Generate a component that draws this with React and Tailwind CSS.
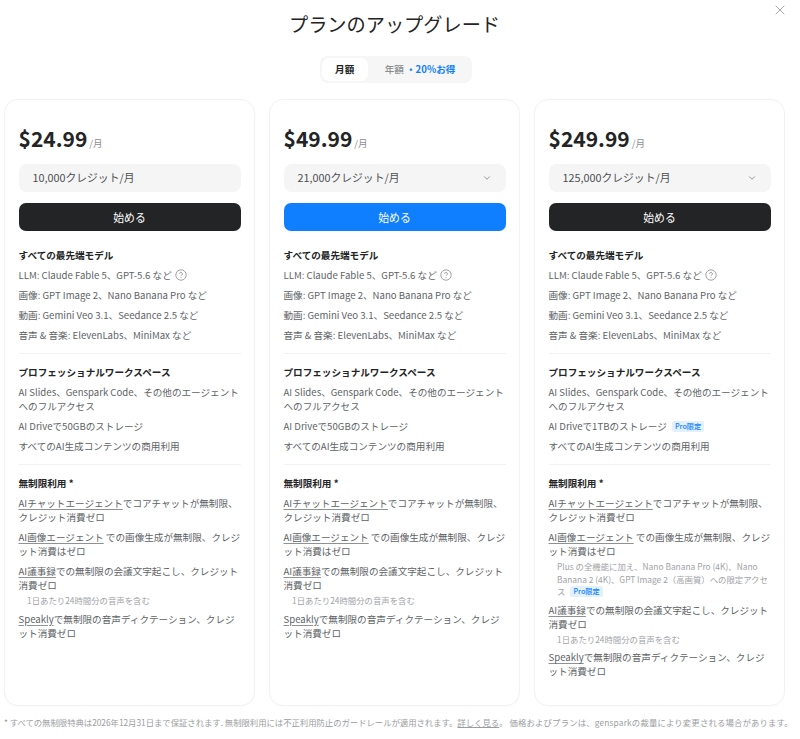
import React from "react";
import { X, ChevronDown } from "lucide-react";

const plans = [
  { price: "$24.99", credits: "10,000クレジット/月", dark: true, arrow: false, drive: "AI Driveで50GBのストレージ" },
  { price: "$49.99", credits: "21,000クレジット/月", dark: false, arrow: true, drive: "AI Driveで50GBのストレージ" },
  { price: "$249.99", credits: "125,000クレジット/月", dark: true, arrow: true, drive: "AI Driveで1TBのストレージ", pro: true },
];

function ProBadge() {
  return (
    <span className="inline-block ml-[5px] px-[3px] rounded-[2px] bg-[#e3f1ff] text-[#0f7fff] text-[7.2px] leading-[11px] font-medium align-[1px]">
      Pro限定
    </span>
  );
}

function HelpIcon() {
  return (
    <svg className="inline-block ml-[3px] align-[-2px]" width="12" height="12" viewBox="0 0 12 12" fill="none">
      <circle cx="6" cy="6" r="5.2" stroke="#8a8a8a" strokeWidth="0.8" />
      <path d="M4.6 4.8a1.4 1.4 0 1 1 2.1 1.2c-.5.3-.7.5-.7 1" stroke="#8a8a8a" strokeWidth="0.8" fill="none" />
      <circle cx="6" cy="8.6" r="0.5" fill="#8a8a8a" />
    </svg>
  );
}

function Heading({ children }) {
  return <h3 className="text-[9.6px] leading-[14px] font-bold text-[#232425] mb-[6px]">{children}</h3>;
}

function Line({ children }) {
  return <p className="text-[9.6px] leading-[14px] text-[#606366] mb-[6px]">{children}</p>;
}

function Note({ children }) {
  return <p className="pl-[8.5px] text-[8.4px] leading-[12.5px] text-[#a0a3a6] -mt-[4px] mb-[5px]">{children}</p>;
}

function Link({ children }) {
  return <span className="underline underline-offset-2 decoration-[#8f9295]">{children}</span>;
}

function PlanCard({ plan }) {
  return (
    <div className="flex-1 h-[607px] rounded-[14px] border border-[#f2f2f3] bg-white px-[13.5px] pt-[24px] shadow-[0_1px_2px_rgba(0,0,0,0.02)]">
      <div className="flex items-baseline h-[28px]">
        <span className="text-[21px] font-bold leading-[28px] text-[#232425]">{plan.price}</span>
        <span className="ml-[2px] text-[9.6px] text-[#8a8d90]">/月</span>
      </div>
      <div className="mt-[12px] h-[28px] rounded-[8px] bg-[#f5f5f5] px-[14px] pb-[1px] flex items-center justify-between text-[10.8px] text-[#4d4f52]">
        {plan.credits}
        {plan.arrow && <ChevronDown size={10} className="text-[#808285]" />}
      </div>
      <button
        className={
          plan.dark
            ? "mt-[11px] w-full h-[28px] rounded-[7px] bg-[#232425] text-white text-[10.8px]"
            : "mt-[11px] w-full h-[28px] rounded-[7px] bg-[#0f7fff] text-white text-[10.8px]"
        }
      >
        始める
      </button>

      <div className="mt-[17px]">
        <Heading>すべての最先端モデル</Heading>
        <Line>
          LLM: Claude Fable 5、GPT-5.6 など
          <HelpIcon />
        </Line>
        <Line>画像: GPT Image 2、Nano Banana Pro など</Line>
        <Line>動画: Gemini Veo 3.1、Seedance 2.5 など</Line>
        <Line>音声 &amp; 音楽: ElevenLabs、MiniMax など</Line>
      </div>
      <div className="h-px bg-[#f2f2f3] mt-[11px] mb-[11px]" />
      <div>
        <Heading>プロフェッショナルワークスペース</Heading>
        <Line>AI Slides、Genspark Code、その他のエージェントへのフルアクセス</Line>
        <Line>
          {plan.drive}
          {plan.pro && <ProBadge />}
        </Line>
        <Line>すべてのAI生成コンテンツの商用利用</Line>
      </div>
      <div className="h-px bg-[#f2f2f3] mt-[11px] mb-[11px]" />
      <div>
        <Heading>無制限利用 *</Heading>
        <Line>
          <Link>AIチャットエージェント</Link>でコアチャットが無制限、クレジット消費ゼロ
        </Line>
        <Line>
          <Link>AI画像エージェント</Link> での画像生成が無制限、クレジット消費はゼロ
        </Line>
        {plan.pro && (
          <Note>
            Plus の全機能に加え、Nano Banana Pro (4K)、Nano Banana 2 (4K)、GPT Image 2（高画質）への限定アクセス
            <ProBadge />
          </Note>
        )}
        <Line>
          <Link>AI議事録</Link>での無制限の会議文字起こし、クレジット消費ゼロ
        </Line>
        <Note>1日あたり24時間分の音声を含む</Note>
        <Line>
          <Link>Speakly</Link>で無制限の音声ディクテーション、クレジット消費ゼロ
        </Line>
      </div>
    </div>
  );
}

export default function App() {
  return (
    <div className="relative w-[800px] h-[739px] overflow-hidden bg-white font-['Noto_Sans_CJK_JP','Noto_Sans',sans-serif]">
      <button className="absolute top-[2px] right-[12px] text-[#7d7f82]">
        <X size={16} strokeWidth={1} />
      </button>
      <div className="w-[781px] ml-[4px]">
        <h1 className="pt-[9px] text-center text-[19.2px] leading-[30px] text-[#232425]">プランのアップグレード</h1>
        <div className="flex justify-center mt-[17px] pl-[3px]">
          <div className="flex items-center h-[27px] rounded-[8px] bg-[#f6f6f6] p-[2px] text-[9.6px] font-medium">
            <span className="flex items-center justify-center h-[23px] w-[46px] rounded-[7px] bg-white text-[#232425] font-bold">月額</span>
            <span className="pl-[17px] pr-[15px] text-[#8a8d90]">
              年額 <span className="text-[#0f7fff] font-bold">・20%お得</span>
            </span>
          </div>
        </div>
        <div className="flex gap-[14px] mt-[16px]">
          {plans.map((plan) => (
            <PlanCard key={plan.price} plan={plan} />
          ))}
        </div>
        <p className="mt-[10px] text-[8.4px] leading-[12px] text-[#9a9da0] whitespace-nowrap">
          <span className="tracking-[-0.04px]">
            * すべての無制限特典は2026年12月31日まで保証されます. 無制限利用には不正利用防止のガードレールが適用されます。
          </span>
          <span className="underline">詳しく見る</span>。{" "}
          <span className="tracking-[0.15px]">価格およびプランは、gensparkの裁量により変更される場合があります。</span>
        </p>
      </div>
    </div>
  );
}
